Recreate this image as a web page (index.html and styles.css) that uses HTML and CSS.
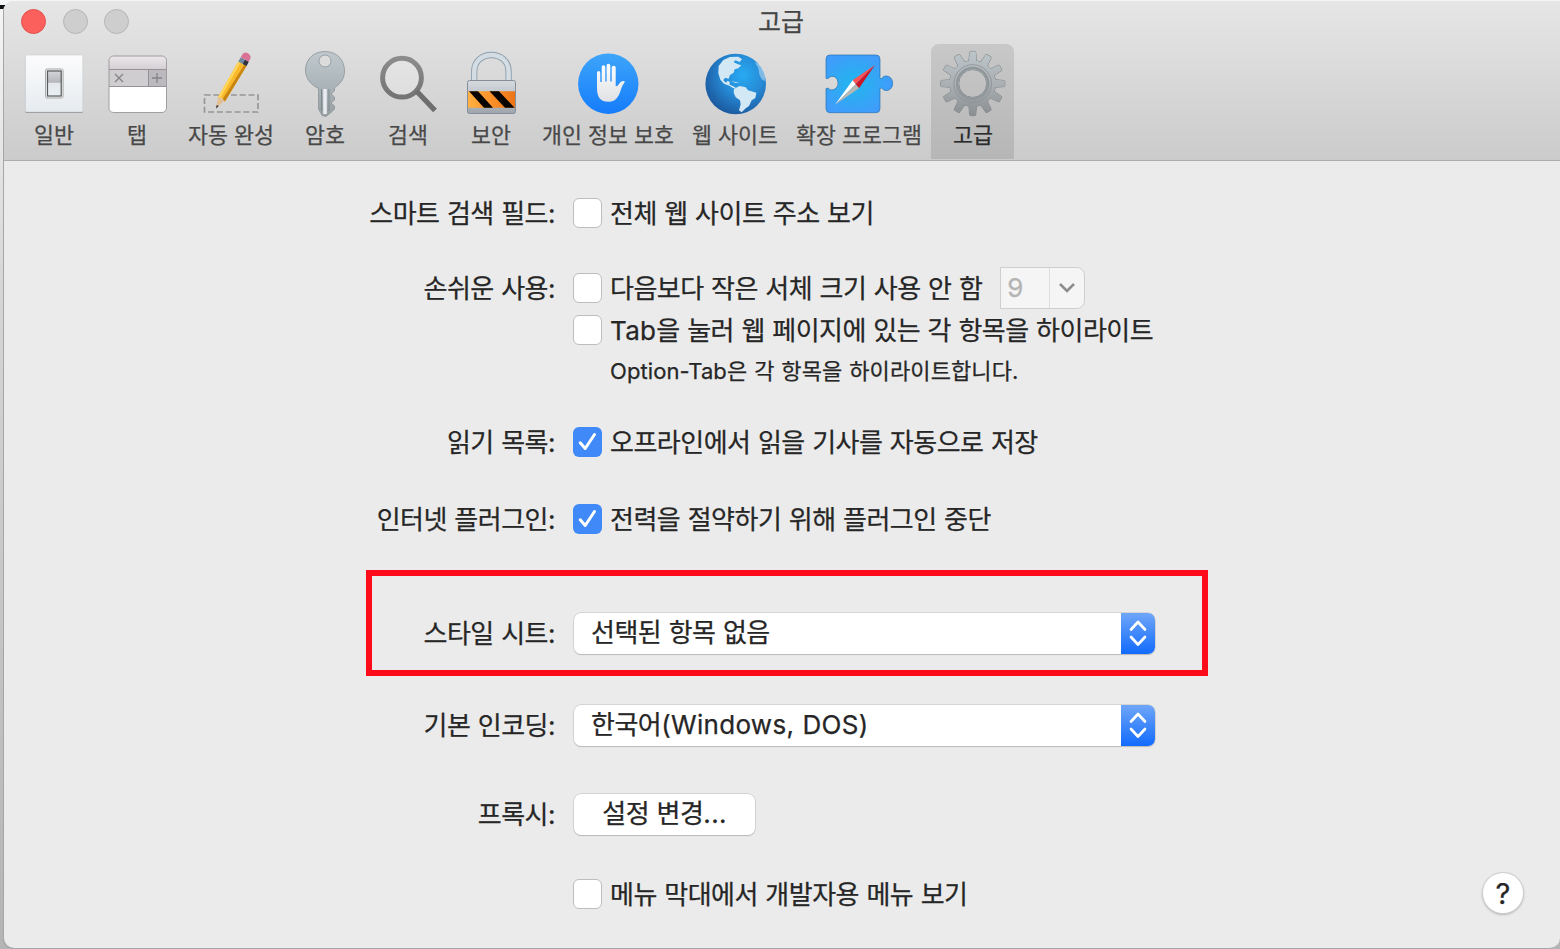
FILE: index.html
```html
<!DOCTYPE html>
<html lang="ko">

<head>
  <meta charset="UTF-8">
  <meta name="viewport" content="width=device-width, initial-scale=1.0">
  <title>고급</title>
  <link rel="stylesheet" href="styles.css">
</head>

<body>
  <div class="corner-mark"></div>
  <div class="window">
    <header class="header">
      <div class="titlebar">
        <div class="lights">
          <span class="light light-close"></span>
          <span class="light"></span>
          <span class="light"></span>
        </div>
        <h1 class="title">고급</h1>
      </div>
      <nav class="toolbar">
        <div class="tool">
          <svg class="icon" viewBox="0 0 70 70">
            <defs>
              <linearGradient id="tile" x2="0" y2="1"><stop stop-color="#fcfcfd"/><stop offset="1" stop-color="#e6ebef"/></linearGradient>
              <linearGradient id="knob" x2="0" y2="1"><stop stop-color="#d4d5d9"/><stop offset=".45" stop-color="#b5b6bb"/><stop offset=".5" stop-color="#e4e8ec"/><stop offset="1" stop-color="#e9eff2"/></linearGradient>
            </defs>
            <rect x="6.3" y="7" width="57.6" height="57" rx="1.5" fill="#8c9094"/>
            <rect x="6.3" y="6" width="57.6" height="57" rx="1.5" fill="url(#tile)" stroke="#c9cdd0" stroke-width=".6"/>
            <rect x="26.5" y="20" width="17.6" height="29" rx="1.5" fill="#eee" stroke="#aaa"/>
            <rect x="28.5" y="22" width="13.7" height="25" fill="url(#knob)" stroke="#555a5e" stroke-width="1.2"/>
          </svg>
          <span class="tool-name">일반</span>
        </div>
        <div class="tool">
          <svg class="icon" viewBox="0 0 70 70">
            <defs>
              <linearGradient id="bar" x2="0" y2="1"><stop stop-color="#ebe7eb"/><stop offset="1" stop-color="#d4d0d4"/></linearGradient>
            </defs>
            <rect x="7" y="7" width="57.5" height="56.5" rx="4.5" fill="#fff"/>
            <path d="M7 20V11.5A4.5 4.5 0 0 1 11.5 7H60A4.5 4.5 0 0 1 64.5 11.5V20Z" fill="url(#bar)"/>
            <path d="M7 20.5H46.5V37.5H7Z" fill="#cfcdd0"/>
            <path d="M46.5 20.5H64.5V37.5H46.5Z" fill="#bbb9bd"/>
            <path d="M7 20.5H64.5M7 37.5H64.5M46.5 20.5V37.5" stroke="#949296" fill="none"/>
            <path d="M13 25L21 33M21 25L13 33M50 29H60M55 24V34" stroke="#858387" stroke-width="1.3" fill="none"/>
            <rect x="7" y="7" width="57.5" height="56.5" rx="4.5" fill="none" stroke="#979599" stroke-width=".9"/>
          </svg>
          <span class="tool-name">탭</span>
        </div>
        <div class="tool tool-autofill">
          <svg class="icon" viewBox="0 0 70 70">
            <rect x="8.5" y="46" width="53.5" height="17" fill="none" stroke="#969696" stroke-width="1.7" stroke-dasharray="6 2.8"/>
            <path d="M20 59.5L22 48L28.500 51.5Z" fill="#e5bf94"/>
            <path d="M20 59.5L20.600 56L22.800 57Z" fill="#333"/>
            <path d="M22 48L42.300 12.500L50.500 17L29 52.5L26.500 49.5Z" fill="#f9b92a"/>
            <path d="M22 48L42.300 12.500L44.500 13.700L24.500 49Z" fill="#ffd45a"/>
            <path d="M26.700 50L48.300 15.800L50.500 17L29 52.5Z" fill="#c98512"/>
            <path d="M42.300 12.500L44.800 8.300L52.700 12.800L50.500 17Z" fill="#7189a0"/>
            <path d="M46.700 15L49 10.800L52.700 12.800L50.500 17Z" fill="#30333d"/>
            <path d="M44.800 8.300L46.500 5.300Q48.500 2.200 52 4.300Q55.500 6.500 54.300 9.800L52.700 12.800Z" fill="#da7197"/>
          </svg>
          <span class="tool-name">자동 완성</span>
        </div>
        <div class="tool">
          <svg class="icon" viewBox="0 0 70 70">
            <defs>
              <linearGradient id="steel" x2="0" y2="1"><stop stop-color="#c0c8cd"/><stop offset=".5" stop-color="#acb6ba"/><stop offset="1" stop-color="#979ea2"/></linearGradient>
            </defs>
            <path fill-rule="evenodd" d="M35 2.5C23 2.5 15 11 15.500 22C16 30 21 36 28.5 39.5V60L32 66.5L36 67.5L40.5 64L44.5 60V57L41 54L44.5 51V48L41 45L44.5 42V38.5C51 35 54.5 29 54.5 22C54.5 11 47 2.5 35 2.5ZM35 6A6 6 0 1 1 35 18A6 6 0 1 1 35 6Z" fill="url(#steel)" stroke="#8b9498" stroke-width=".8"/>
            <path d="M31.500 40V62M39 40V62" stroke="#7f888d" fill="none"/>
            <path d="M35 40V65" stroke="#e9edf0" stroke-width="3.5"/>
          </svg>
          <span class="tool-name">암호</span>
        </div>
        <div class="tool">
          <svg class="icon" viewBox="0 0 70 70">
            <defs>
              <linearGradient id="lens" x2="0" y2="1"><stop stop-color="#8c8c8c"/><stop offset="1" stop-color="#747474"/></linearGradient>
            </defs>
            <circle cx="29" cy="28.7" r="19.4" fill="#fff" fill-opacity=".22" stroke="url(#lens)" stroke-width="5"/>
            <path d="M43.500 42L62 61.500" stroke="#6e6e6e" stroke-width="5.300"/>
          </svg>
          <span class="tool-name">검색</span>
        </div>
        <div class="tool">
          <svg class="icon" viewBox="0 0 70 70">
            <defs>
              <linearGradient id="lock" x2="0" y2="1"><stop stop-color="#d6dbe0"/><stop offset="1" stop-color="#9fa5ad"/></linearGradient>
              <linearGradient id="orange"><stop stop-color="#ffb041"/><stop offset=".5" stop-color="#fb912a"/><stop offset="1" stop-color="#ed7417"/></linearGradient>
            </defs>
            <path d="M18.200 33V22.500C18.200 0.500 52.600 0.500 52.600 22.500V33" fill="none" stroke="#8e9fad" stroke-width="6.300"/>
            <path d="M18.200 33V22.500C18.200 0.500 52.600 0.500 52.600 22.500V33" fill="none" stroke="#d3dde3" stroke-width="4.500"/>
            <rect x="11.500" y="31.500" width="48" height="33" rx="2" fill="url(#lock)" stroke="#858e99"/>
            <path d="M12 42.300H59V58.700H12Z" fill="url(#orange)"/>
            <path d="M13 42.300H22L37 58.700H28ZM33.500 42.300H43L58.500 58.700H49Z" fill="#080500"/>
          </svg>
          <span class="tool-name">보안</span>
        </div>
        <div class="tool tool-privacy">
          <svg class="icon" viewBox="0 0 70 70">
            <defs>
              <linearGradient id="blue" x2="0" y2="1"><stop stop-color="#3da5fa"/><stop offset="1" stop-color="#157cfb"/></linearGradient>
              <linearGradient id="hand" x2="0" y2="1"><stop stop-color="#fff"/><stop offset="1" stop-color="#dfe1e4"/></linearGradient>
            </defs>
            <circle cx="35.300" cy="34.700" r="30.200" fill="url(#blue)"/>
            <path d="M24 24Q24 22 25.700 22Q27.300 22 27.300 24V33H28.700V18Q28.700 16.300 30.500 16.300Q32.300 16.300 32.300 18V32.500H33.600V16.600Q33.600 14.700 35.400 14.700Q37.300 14.700 37.300 16.600V32.500H38.700V18.500Q38.700 16.700 40.700 16.700Q42.700 16.700 42.700 18.500V37Q44.500 37.700 46 35Q47.600 31.800 51.200 32Q52.500 32.300 51.300 33.700Q49.500 36 48.600 38.500C46.500 45 44.500 52.800 35.500 52.800C27 52.800 24 48 24 39Z" fill="url(#hand)"/>
          </svg>
          <span class="tool-name">개인 정보 보호</span>
        </div>
        <div class="tool tool-sites">
          <svg class="icon" viewBox="0 0 70 70">
            <defs>
              <radialGradient id="sea" cx=".62" cy=".35" r=".68"><stop stop-color="#27aaf2"/><stop offset=".5" stop-color="#278ad6"/><stop offset="1" stop-color="#1b5a9f"/></radialGradient>
            </defs>
            <circle cx="35.700" cy="35" r="30.300" fill="url(#sea)"/>
            <g transform="translate(-170 -9) scale(.33333)" fill="#d3e8f5">
              <path d="M566 78L580 60L600 51L625 50L636 58L629 66L616 61L611 67L624 73L634 76L625 85L614 88L611 98L600 105L596 116L585 113L580 121L588 128L593 122L599 126L599 134L610 139L618 144L610 145L598 137L582 131L571 119L565 100Z"/>
              <path d="M612 146L629 138L647 142L654 151L679 158L676 174L665 181L657 198L647 205L635 217L627 211L632 193L630 181L617 172L611 158Z"/>
              <path d="M603 123L616 126L629 129L617 129Z"/>
              <path d="M674 66L687 72L700 91L706 111L704 123L694 117L688 103L685 84Z" opacity=".5"/>
            </g>
          </svg>
          <span class="tool-name">웹 사이트</span>
        </div>
        <div class="tool tool-extensions">
          <svg class="icon" viewBox="0 0 70 70">
            <defs>
              <radialGradient id="puzzle" cx=".42" cy=".5" r=".55"><stop stop-color="#20b7ed"/><stop offset="1" stop-color="#409cfb"/></radialGradient>
            </defs>
            <g transform="translate(-39 -49) scale(.33333)">
              <path d="M135 165H273Q285 165 285 177V235Q290 239 293 232C302 223 323 229 323 250C323 271 302 277 293 267Q290 262 285 266V326Q285 338 273 338H135Q123 338 123 326V266Q129 262 132 267C141 274 159 267 159 250C159 229 141 225 132 233Q129 238 123 235V177Q123 165 135 165Z" fill="url(#puzzle)" stroke="#2670ad" stroke-width="2"/>
              <path d="M270 195L203 241L212 253Z" fill="#ff5252"/>
              <path d="M270 195L212 253L222 265Z" fill="#cd1726"/>
              <path d="M150 314L203 241L212 253Z" fill="#fff"/>
              <path d="M150 314L212 253L222 265Z" fill="#b9b8b3"/>
            </g>
          </svg>
          <span class="tool-name">확장 프로그램</span>
        </div>
        <div class="tool tool-active">
          <svg class="icon" viewBox="0 0 70 70">
            <defs>
              <linearGradient id="gear" gradientUnits="userSpaceOnUse" x1="0" y1="2" x2="0" y2="67"><stop stop-color="#bcc6cb"/><stop offset=".5" stop-color="#aab0b3"/><stop offset="1" stop-color="#8a8e91"/></linearGradient>
              <path id="tooth" d="M30.800 13.500L31.700 3Q31.900 2.400 32.700 2.400H36.700Q37.500 2.400 37.700 3L38.600 13.500Z"/>
              <g id="teeth">
                <use href="#tooth"/>
                <use href="#tooth" transform="rotate(30 34.700 34.500)"/>
                <use href="#tooth" transform="rotate(60 34.700 34.500)"/>
                <use href="#tooth" transform="rotate(90 34.700 34.500)"/>
                <use href="#tooth" transform="rotate(120 34.700 34.500)"/>
                <use href="#tooth" transform="rotate(150 34.700 34.500)"/>
              </g>
              <mask id="hole">
                <rect width="70" height="70" fill="#000"/>
                <g fill="#fff">
                  <use href="#teeth"/>
                  <use href="#teeth" transform="rotate(180 34.700 34.500)"/>
                  <circle cx="34.700" cy="34.500" r="23"/>
                </g>
                <circle cx="34.700" cy="34.500" r="14" fill="#000"/>
              </mask>
            </defs>
            <g fill="none" stroke="#7f8588" stroke-width="1">
              <use href="#teeth"/>
              <use href="#teeth" transform="rotate(180 34.700 34.500)"/>
              <circle cx="34.700" cy="34.500" r="23"/>
              <circle cx="34.700" cy="34.500" r="14"/>
            </g>
            <rect width="70" height="70" fill="url(#gear)" mask="url(#hole)"/>
            <circle cx="34.700" cy="34.500" r="15.500" fill="none" stroke="#90979b" stroke-width="2.500"/>
            <circle cx="34.700" cy="34.500" r="18.800" fill="none" stroke="#898f92" stroke-width=".8"/>
          </svg>
          <span class="tool-name">고급</span>
        </div>
      </nav>
    </header>

    <main class="form">
      <div class="row">
        <span class="label">스마트 검색 필드:</span>
        <span class="check"></span>
        <span class="text">전체 웹 사이트 주소 보기</span>
      </div>
      <div class="row row-access">
        <span class="label">손쉬운 사용:</span>
        <span class="check"></span>
        <span class="text">다음보다 작은 서체 크기 사용 안 함</span>
        <div class="combo">
          <span class="combo-value">9</span>
          <span class="combo-arrow">
            <svg width="18" height="12" viewBox="0 0 18 12"><path d="M2 2L9 9L16 2" fill="none" stroke="#8d8d8d" stroke-width="2.600"/></svg>
          </span>
        </div>
      </div>
      <div class="row row-tab">
        <span class="label"></span>
        <span class="check"></span>
        <span class="text"><span class="latin">Tab</span>을 눌러 웹 페이지에 있는 각 항목을 하이라이트</span>
      </div>
      <div class="row row-note">
        <span class="label"></span>
        <span class="note">Option-Tab은 각 항목을 하이라이트합니다.</span>
      </div>
      <div class="row row-reading">
        <span class="label">읽기 목록:</span>
        <span class="check checked">
          <svg width="29" height="29" viewBox="0 0 29 29"><path d="M7.200 15.800L12.200 21.500L21.500 7.500" fill="none" stroke="#fff" stroke-width="3" stroke-linecap="round" stroke-linejoin="round"/></svg>
        </span>
        <span class="text">오프라인에서 읽을 기사를 자동으로 저장</span>
      </div>
      <div class="row row-plugin">
        <span class="label">인터넷 플러그인:</span>
        <span class="check checked">
          <svg width="29" height="29" viewBox="0 0 29 29"><path d="M7.200 15.800L12.200 21.500L21.500 7.500" fill="none" stroke="#fff" stroke-width="3" stroke-linecap="round" stroke-linejoin="round"/></svg>
        </span>
        <span class="text">전력을 절약하기 위해 플러그인 중단</span>
      </div>
      <div class="row row-style">
        <span class="label">스타일 시트:</span>
        <div class="popup">
          <span class="popup-value">선택된 항목 없음</span>
          <span class="popup-arrows">
            <svg width="18" height="28" viewBox="0 0 18 28"><path d="M2 10.500L9 3L16 10.500M2 18L9 25.500L16 18" fill="none" stroke="#fff" stroke-width="2.700" stroke-linecap="round" stroke-linejoin="round"/></svg>
          </span>
        </div>
      </div>
      <div class="row row-encoding">
        <span class="label">기본 인코딩:</span>
        <div class="popup">
          <span class="popup-value">한국어<span class="latin">(Windows, DOS)</span></span>
          <span class="popup-arrows">
            <svg width="18" height="28" viewBox="0 0 18 28"><path d="M2 10.500L9 3L16 10.500M2 18L9 25.500L16 18" fill="none" stroke="#fff" stroke-width="2.700" stroke-linecap="round" stroke-linejoin="round"/></svg>
          </span>
        </div>
      </div>
      <div class="row row-proxy">
        <span class="label">프록시:</span>
        <button class="button">설정 변경<span class="latin">...</span></button>
      </div>
      <div class="row row-develop">
        <span class="label"></span>
        <span class="check"></span>
        <span class="text">메뉴 막대에서 개발자용 메뉴 보기</span>
      </div>
    </main>
    <button class="help">?</button>
    <div class="highlight"></div>
  </div>
</body>

</html>
```
FILE: styles.css
```css
* {
  box-sizing: border-box;
}

body {
  margin: 0;
  height: 949px;
  padding: 1px 0 1px 4px;
  overflow: hidden;
  background: linear-gradient(#f4f6f7, #d4d6d8 30%, #b4b4b4);
  font-family: Inter, "Noto Sans CJK KR", sans-serif;
  color: #262626;
  -webkit-text-stroke: 0.25px;
}

.corner-mark {
  position: absolute;
  left: 0;
  top: 5px;
  width: 5px;
  height: 4px;
  background: #111;
}

.window {
  position: relative;
  height: 947px;
  background: #ebebeb;
  border-radius: 9px 0 10px 10px;
  box-shadow: -1px 1px 0 #a6a6a6;
  overflow: hidden;
}

.header {
  height: 160px;
  background: linear-gradient(#e6e6e6, #cbcbcb);
  border-bottom: 1px solid #adadad;
}

.titlebar {
  display: grid;
  grid-template-columns: 200px 1fr 200px;
  align-items: center;
  height: 43px;
}

.lights {
  display: flex;
  gap: 16.5px;
  padding: 0 0 3px 17px;
}

.light {
  width: 25px;
  height: 25px;
  border: 1px solid #b4b4b4;
  border-radius: 50%;
  background: #cecece;
}

.light-close {
  background: #fc605c;
  border-color: #e2504c;
}

.title {
  margin: 0 0 2px -2px;
  font-size: 25px;
  font-weight: 400;
  line-height: 40px;
  text-align: center;
  color: #454545;
}

.toolbar {
  display: flex;
  height: 115px;
  padding-left: 8px;
}

.tool {
  display: flex;
  flex-direction: column;
  align-items: center;
  width: 83px;
  padding-top: 5px;
}

.tool-autofill {
  width: 105px;
}

.tool-privacy {
  width: 151px;
}

.tool-sites {
  width: 103px;
}

.tool-extensions {
  width: 145px;
}

.tool-active {
  background: linear-gradient(#c8c8c8, #b6b6b6);
  border-radius: 8px 8px 0 0;
}

.icon {
  width: 70px;
  height: 70px;
}

.tool-name {
  padding-left: 1px;
  font-size: 21.7px;
  line-height: 32px;
  white-space: nowrap;
  color: #484848;
}

.tool-active .tool-name {
  color: #2c2c2c;
}

/* settings rows */
.form {
  padding-top: 32px;
}

.row {
  display: flex;
  align-items: center;
  height: 40px;
  font-size: 26px;
  letter-spacing: -0.5px;
  word-spacing: 0.6px;
  white-space: nowrap;
}

.row-access {
  margin-top: 35px;
}

.row-tab {
  margin-top: 2px;
}

.row-note {
  margin-top: 1px;
}

.row-reading {
  margin-top: 31px;
}

.row-plugin {
  margin-top: 37px;
}

.row-style {
  margin-top: 74px;
}

.row-encoding {
  margin-top: 52px;
}

.row-proxy {
  margin-top: 49px;
}

.row-develop {
  margin-top: 40px;
}

.label {
  width: 551px;
  margin-right: 18px;
  padding-bottom: 4px;
  text-align: right;
}

.text {
  padding-bottom: 4px;
}

.latin {
  letter-spacing: 0.3px;
}

.check {
  width: 29px;
  height: 30px;
  margin-right: 8px;
  border: 1px solid #bdbdbd;
  border-radius: 6px;
  background: #fff;
}

.checked {
  border: none;
  background: #3f89f8;
}

.note {
  margin-left: 37px;
  padding-bottom: 4px;
  font-size: 22px;
  letter-spacing: 0.1px;
}

.combo {
  display: flex;
  width: 85px;
  height: 42px;
  margin-left: 18px;
  border: 1px solid #cfcfcf;
  border-radius: 0 8px 8px 0;
  background: #f5f5f5;
}

.combo-value {
  width: 49px;
  padding-left: 6px;
  line-height: 40px;
  color: #b4b4b4;
  border-right: 1px solid #dedede;
}

.combo-arrow {
  display: flex;
  align-items: center;
  justify-content: center;
  flex: 1;
}

.popup {
  display: flex;
  width: 581px;
  height: 41px;
  margin-left: 1px;
  border-radius: 7px;
  background: #fff;
  box-shadow: 0 0 0 0.5px #bebebe, 0 1px 1px #b8b8b8;
}

.popup-value {
  flex: 1;
  padding-left: 17px;
  line-height: 40px;
}

.popup-arrows {
  display: flex;
  align-items: center;
  justify-content: center;
  width: 34px;
  border-radius: 0 7px 7px 0;
  background: linear-gradient(#6fa6f8, #126bfd);
}

.button {
  width: 181px;
  height: 41px;
  margin-left: 1px;
  padding: 0;
  border: none;
  border-radius: 7px;
  background: #fff;
  box-shadow: 0 0 0 0.5px #bebebe, 0 1px 1px #b8b8b8;
  font: inherit;
  letter-spacing: inherit;
  word-spacing: inherit;
  line-height: 40px;
  color: inherit;
}

.help {
  position: absolute;
  right: 37px;
  bottom: 35px;
  width: 40px;
  height: 40px;
  padding: 0;
  border: none;
  border-radius: 50%;
  background: #fff;
  box-shadow: 0 0 0 1px #cfcfcf, 0 1px 2px 1px #b8b8b8;
  font: 400 29px Inter, sans-serif;
  color: #262626;
}

/* red frame over the style sheet row */
.highlight {
  position: absolute;
  left: 362px;
  top: 568.5px;
  width: 842px;
  height: 106px;
  border: 6px solid #fe0b1b;
}
```
